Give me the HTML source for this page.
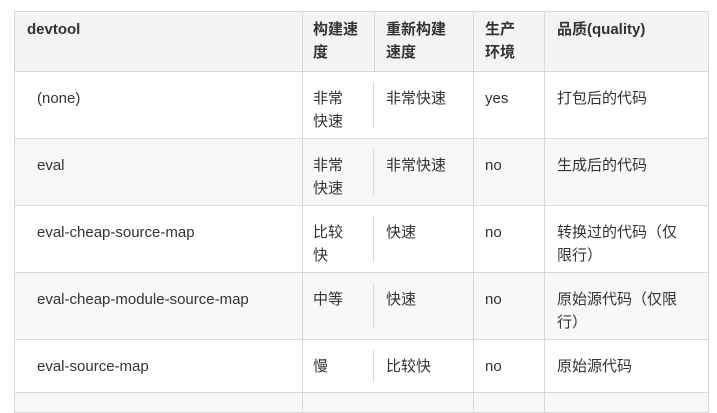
<!DOCTYPE html>
<html><head><meta charset="utf-8"><style>
body{margin:0;width:717px;height:400px;background:#fff;overflow:hidden;font-family:"Liberation Sans","Noto Sans CJK SC",sans-serif;font-size:15px;color:#333;}
.r{position:absolute;left:14px;width:695px;border:1px solid #d6d8da;border-top:none;box-sizing:border-box;}
.c{position:absolute;top:0;bottom:0;border-left:1px solid #d6d8da;}
.t{position:absolute;line-height:23px;}
.v{position:absolute;left:373px;width:1px;background:#d6d8da;}
</style></head><body>
<div class="r" style="top:11px;height:61px;background:#f2f4f5;border-top:1px solid #d6d8da;">
<div class="c" style="left:287px"></div><div class="c" style="left:359px"></div><div class="c" style="left:458px"></div><div class="c" style="left:529px"></div></div>
<div class="t" style="left:27px;top:18px;font-weight:bold">devtool</div>
<div class="t" style="left:313px;top:18px;font-weight:bold;width:55px">构建速<br>度</div>
<div class="t" style="left:386px;top:18px;font-weight:bold">重新构建<br>速度</div>
<div class="t" style="left:485px;top:18px;font-weight:bold">生产<br>环境</div>
<div class="t" style="left:557px;top:18px;font-weight:bold">品质(quality)</div>

<div class="r" style="top:72px;height:67px;background:#fff"><div class="c" style="left:287px"></div><div class="c" style="left:458px"></div><div class="c" style="left:529px"></div></div>
<div class="r" style="top:139px;height:67px;background:#f8f8f8"><div class="c" style="left:287px"></div><div class="c" style="left:458px"></div><div class="c" style="left:529px"></div></div>
<div class="r" style="top:206px;height:67px;background:#fff"><div class="c" style="left:287px"></div><div class="c" style="left:458px"></div><div class="c" style="left:529px"></div></div>
<div class="r" style="top:273px;height:67px;background:#f8f8f8"><div class="c" style="left:287px"></div><div class="c" style="left:458px"></div><div class="c" style="left:529px"></div></div>
<div class="r" style="top:340px;height:53px;background:#fff"><div class="c" style="left:287px"></div><div class="c" style="left:458px"></div><div class="c" style="left:529px"></div></div>
<div class="r" style="top:393px;height:20px;background:#f8f8f8"><div class="c" style="left:287px"></div><div class="c" style="left:458px"></div><div class="c" style="left:529px"></div></div>

<div class="v" style="top:82px;height:46px"></div>
<div class="v" style="top:149px;height:46px"></div>
<div class="v" style="top:216px;height:46px"></div>
<div class="v" style="top:283px;height:46px"></div>
<div class="v" style="top:350px;height:32px"></div>

<div class="t" style="left:37px;top:87px">(none)</div>
<div class="t" style="left:313px;top:87px">非常<br>快速</div>
<div class="t" style="left:386px;top:87px">非常快速</div>
<div class="t" style="left:485px;top:87px">yes</div>
<div class="t" style="left:557px;top:87px">打包后的代码</div>

<div class="t" style="left:37px;top:154px">eval</div>
<div class="t" style="left:313px;top:154px">非常<br>快速</div>
<div class="t" style="left:386px;top:154px">非常快速</div>
<div class="t" style="left:485px;top:154px">no</div>
<div class="t" style="left:557px;top:154px">生成后的代码</div>

<div class="t" style="left:37px;top:221px">eval-cheap-source-map</div>
<div class="t" style="left:313px;top:221px">比较<br>快</div>
<div class="t" style="left:386px;top:221px">快速</div>
<div class="t" style="left:485px;top:221px">no</div>
<div class="t" style="left:557px;top:221px">转换过的代码（仅<br>限行）</div>

<div class="t" style="left:37px;top:288px">eval-cheap-module-source-map</div>
<div class="t" style="left:313px;top:288px">中等</div>
<div class="t" style="left:386px;top:288px">快速</div>
<div class="t" style="left:485px;top:288px">no</div>
<div class="t" style="left:557px;top:288px">原始源代码（仅限<br>行）</div>

<div class="t" style="left:37px;top:355px">eval-source-map</div>
<div class="t" style="left:313px;top:355px">慢</div>
<div class="t" style="left:386px;top:355px">比较快</div>
<div class="t" style="left:485px;top:355px">no</div>
<div class="t" style="left:557px;top:355px">原始源代码</div>
</body></html>
